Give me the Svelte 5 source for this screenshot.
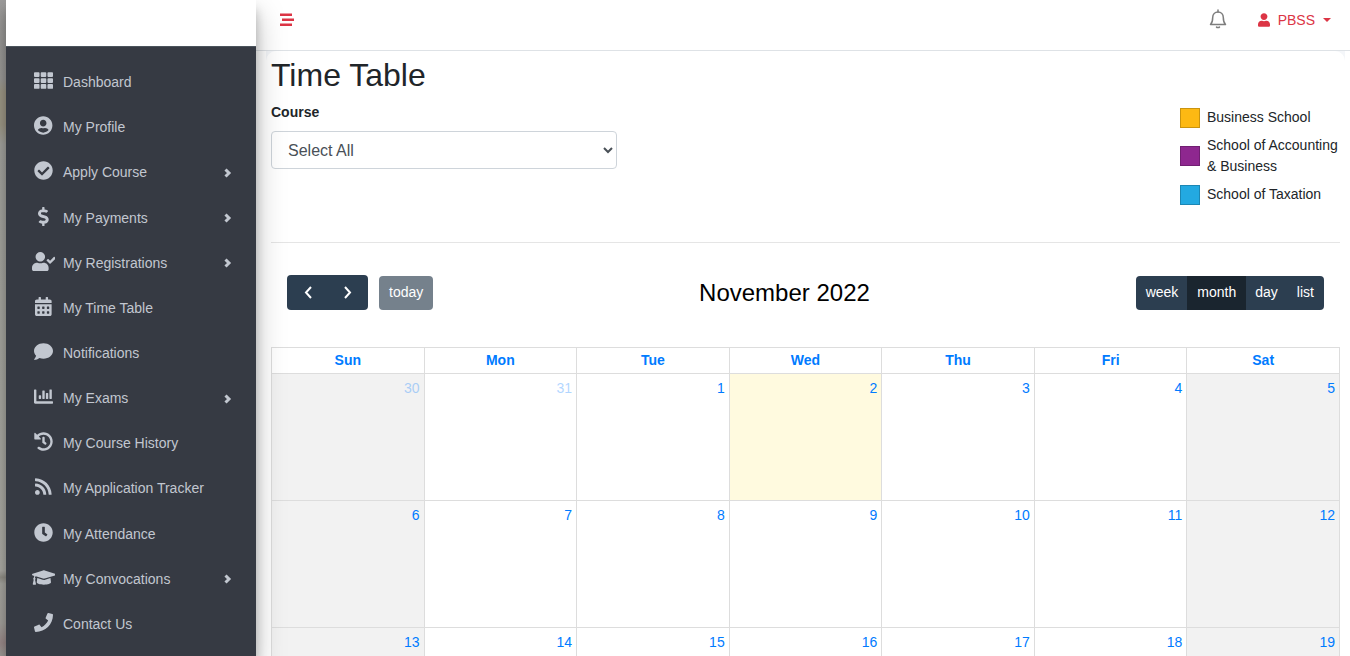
<script>
    const icons = {
        grid: { w: 512, d: "M24 32h101a24 24 0 0 1 24 24v80a24 24 0 0 1-24 24H24a24 24 0 0 1-24-24V56a24 24 0 0 1 24-24zm181 0h102a24 24 0 0 1 24 24v80a24 24 0 0 1-24 24H205a24 24 0 0 1-24-24V56a24 24 0 0 1 24-24zm182 0h101a24 24 0 0 1 24 24v80a24 24 0 0 1-24 24H387a24 24 0 0 1-24-24V56a24 24 0 0 1 24-24zM24 192h101a24 24 0 0 1 24 24v80a24 24 0 0 1-24 24H24a24 24 0 0 1-24-24v-80a24 24 0 0 1 24-24zm181 0h102a24 24 0 0 1 24 24v80a24 24 0 0 1-24 24H205a24 24 0 0 1-24-24v-80a24 24 0 0 1 24-24zm182 0h101a24 24 0 0 1 24 24v80a24 24 0 0 1-24 24H387a24 24 0 0 1-24-24v-80a24 24 0 0 1 24-24zM24 352h101a24 24 0 0 1 24 24v80a24 24 0 0 1-24 24H24a24 24 0 0 1-24-24v-80a24 24 0 0 1 24-24zm181 0h102a24 24 0 0 1 24 24v80a24 24 0 0 1-24 24H205a24 24 0 0 1-24-24v-80a24 24 0 0 1 24-24zm182 0h101a24 24 0 0 1 24 24v80a24 24 0 0 1-24 24H387a24 24 0 0 1-24-24v-80a24 24 0 0 1 24-24z" },
        profile: { w: 496, d: "M248 8C111 8 0 119 0 256s111 248 248 248 248-111 248-248S385 8 248 8zm0 96c48.6 0 88 39.4 88 88s-39.4 88-88 88-88-39.4-88-88 39.4-88 88-88zm0 344c-58.7 0-111.3-26.6-146.500-68.200 18.800-35.400 55.600-59.800 98.500-59.800 2.400 0 4.800.4 7.100 1.100 13 4.200 26.600 6.900 40.900 6.900 14.300 0 28-2.700 40.900-6.900 2.300-.7 4.700-1.100 7.100-1.100 42.900 0 79.700 24.400 98.500 59.800C359.300 421.400 306.700 448 248 448z" },
        check: { w: 512, d: "M504 256c0 136.967-111.033 248-248 248S8 392.967 8 256 119.033 8 256 8s248 111.033 248 248zM227.314 387.314l184-184c6.248-6.248 6.248-16.379 0-22.627l-22.627-22.627c-6.248-6.249-16.379-6.249-22.628 0L216 308.118l-70.059-70.059c-6.248-6.248-16.379-6.248-22.628 0l-22.627 22.627c-6.248 6.248-6.248 16.379 0 22.627l104 104c6.249 6.249 16.379 6.249 22.628.001z" },
        dollar: { w: 288, d: "M209.200 233.400l-108-31.600C88.700 198.200 80 186.500 80 173.500c0-16.300 13.200-29.500 29.500-29.500h66.300c12.200 0 24.200 3.700 34.200 10.500 6.100 4.100 14.300 3.100 19.500-2l34.800-34c7.100-6.900 6.100-18.400-1.800-24.500C238 74.800 207.400 64.100 176 64V16c0-8.800-7.200-16-16-16h-32c-8.800 0-16 7.200-16 16v48h-2.500C45.800 64-5.400 118.700.5 183.600c4.200 46.100 39.400 83.600 83.800 96.600l102.500 30c12.500 3.700 21.200 15.300 21.200 28.300 0 16.300-13.200 29.500-29.500 29.500h-66.300C100 368 88 364.300 78 357.500c-6.100-4.100-14.300-3.100-19.500 2l-34.800 34c-7.100 6.900-6.100 18.400 1.800 24.500 24.500 19.200 55.100 29.900 86.500 30v48c0 8.800 7.200 16 16 16h32c8.800 0 16-7.200 16-16v-48.200c46.600-.9 90.300-28.600 105.700-72.700 21.500-61.600-14.600-124.800-72.500-141.700z" },
        userCheck: { w: 640, d: "M224 256c70.700 0 128-57.300 128-128S294.700 0 224 0 96 57.300 96 128s57.300 128 128 128zm89.600 32h-16.700c-22.200 10.200-46.900 16-72.900 16s-50.600-5.800-72.900-16h-16.700C60.200 288 0 348.200 0 422.400V464c0 26.500 21.500 48 48 48h352c26.500 0 48-21.500 48-48v-41.600c0-74.200-60.200-134.400-134.400-134.400zM636.600 159.600l-27.800-28.200c-4.600-4.700-12.100-4.700-16.800-.1l-104.800 104-45.500-45.800c-4.600-4.700-12.100-4.700-16.800-.1l-28.100 27.900c-4.700 4.600-4.700 12.100-.1 16.800l81.700 82.300c4.600 4.700 12.100 4.700 16.800.1l141.300-140.200c4.600-4.700 4.700-12.200.1-16.700z" },
        calendar: { w: 448, d: "M0 464c0 26.500 21.500 48 48 48h352c26.500 0 48-21.500 48-48V192H0v272zm320-196c0-6.600 5.400-12 12-12h40c6.600 0 12 5.400 12 12v40c0 6.600-5.400 12-12 12h-40c-6.600 0-12-5.400-12-12v-40zm0 128c0-6.600 5.400-12 12-12h40c6.600 0 12 5.400 12 12v40c0 6.600-5.400 12-12 12h-40c-6.600 0-12-5.400-12-12v-40zM192 268c0-6.600 5.400-12 12-12h40c6.600 0 12 5.400 12 12v40c0 6.600-5.400 12-12 12h-40c-6.600 0-12-5.400-12-12v-40zm0 128c0-6.600 5.400-12 12-12h40c6.600 0 12 5.400 12 12v40c0 6.600-5.400 12-12 12h-40c-6.600 0-12-5.400-12-12v-40zM64 268c0-6.600 5.400-12 12-12h40c6.600 0 12 5.400 12 12v40c0 6.600-5.400 12-12 12H76c-6.600 0-12-5.400-12-12v-40zm0 128c0-6.600 5.400-12 12-12h40c6.600 0 12 5.400 12 12v40c0 6.600-5.400 12-12 12H76c-6.600 0-12-5.400-12-12v-40zM400 64h-48V16c0-8.800-7.200-16-16-16h-32c-8.800 0-16 7.200-16 16v48H160V16c0-8.800-7.200-16-16-16h-32c-8.800 0-16 7.200-16 16v48H48C21.500 64 0 85.500 0 112v48h448v-48c0-26.500-21.500-48-48-48z" },
        comment: { w: 512, d: "M256 32C114.600 32 0 125.100 0 240c0 49.600 21.400 95 57 130.700C44.500 421.100 2.700 466 2.200 466.500c-2.200 2.300-2.800 5.700-1.500 8.700S4.800 480 8 480c66.300 0 116-31.800 140.600-51.400 32.700 12.300 69 19.400 107.400 19.400 141.400 0 256-93.100 256-208S397.400 32 256 32z" },
        chart: { w: 512, d: "M332.800 320h38.400c6.400 0 12.800-6.400 12.800-12.800V172.800c0-6.400-6.400-12.800-12.800-12.800h-38.400c-6.400 0-12.800 6.400-12.800 12.800v134.400c0 6.400 6.400 12.800 12.800 12.800zm96 0h38.400c6.400 0 12.800-6.400 12.800-12.800V76.800c0-6.400-6.400-12.800-12.800-12.800h-38.400c-6.400 0-12.800 6.400-12.800 12.800v230.400c0 6.400 6.400 12.800 12.800 12.800zm-288 0h38.400c6.400 0 12.800-6.400 12.800-12.800v-70.400c0-6.400-6.400-12.800-12.800-12.800h-38.400c-6.400 0-12.800 6.400-12.800 12.800v70.400c0 6.400 6.400 12.800 12.800 12.800zm96 0h38.400c6.400 0 12.800-6.400 12.800-12.800V108.800c0-6.400-6.400-12.800-12.800-12.800h-38.400c-6.400 0-12.800 6.400-12.800 12.800v198.400c0 6.400 6.400 12.800 12.800 12.800zM496 384H64V80c0-8.840-7.160-16-16-16H16C7.160 64 0 71.160 0 80v336c0 17.670 14.330 32 32 32h464c8.840 0 16-7.160 16-16v-32c0-8.840-7.160-16-16-16z" },
        history: { w: 512, d: "M504 255.531c.253 136.640-111.180 248.372-247.820 248.468-59.015.042-113.223-20.530-155.822-54.911-11.077-8.940-11.905-25.541-1.839-35.607l11.267-11.267c8.609-8.609 22.353-9.551 31.891-1.984C173.062 425.135 212.781 440 256 440c101.705 0 184-82.311 184-184 0-101.705-82.311-184-184-184-48.814 0-93.149 18.969-126.068 49.932l50.754 50.754c10.080 10.080 2.941 27.314-11.313 27.314H24c-8.837 0-16-7.163-16-16V38.627c0-14.254 17.234-21.393 27.314-11.314l49.372 49.372C129.209 34.136 189.552 8 256 8c136.810 0 247.747 110.780 248 247.531zm-180.912 78.784l9.823-12.630c8.138-10.463 6.253-25.542-4.210-33.679L288 256.349V152c0-13.255-10.745-24-24-24h-16c-13.255 0-24 10.745-24 24v135.651l65.409 50.874c10.463 8.137 25.541 6.253 33.679-4.210z" },
        rss: { w: 448, d: "M128.081 415.959c0 35.369-28.672 64.041-64.041 64.041S0 451.328 0 415.959s28.672-64.041 64.041-64.041 64.040 28.673 64.040 64.041zm175.660 47.250c-8.354-154.600-132.185-278.587-286.950-286.950C7.656 175.765 0 183.105 0 192.253v48.069c0 8.415 6.490 15.472 14.887 16.018 111.832 7.284 201.473 96.702 208.772 208.772.547 8.397 7.604 14.887 16.018 14.887h48.069c9.149.001 16.489-7.655 15.995-16.790zm144.249.288C439.596 229.677 251.465 40.445 16.503 32.010 7.473 31.686 0 38.981 0 48.016v48.068c0 8.625 6.835 15.645 15.453 15.999 191.179 7.839 344.627 161.316 352.465 352.465.353 8.618 7.373 15.453 15.999 15.453h48.068c9.034-.001 16.329-7.474 16.005-16.504z" },
        clock: { w: 512, d: "M256 8C119 8 8 119 8 256s111 248 248 248 248-111 248-248S393 8 256 8zm57.100 350.100L224.900 294c-3.100-2.300-4.900-5.900-4.900-9.700V116c0-6.600 5.400-12 12-12h48c6.600 0 12 5.400 12 12v137.700l63.500 46.200c5.400 3.900 6.500 11.400 2.600 16.800l-28.200 38.800c-3.900 5.300-11.400 6.500-16.800 2.600z" },
        cap: { w: 640, d: "M622.340 153.200L343.400 67.500c-15.200-4.670-31.600-4.670-46.790 0L17.660 153.200c-23.540 7.230-23.540 38.360 0 45.590l48.630 14.940c-10.670 13.190-17.230 29.280-17.880 46.900C38.780 266.150 32 276.110 32 288c0 10.780 5.680 19.850 13.860 25.650L20.330 428.530C18.110 438.520 25.710 448 35.940 448h56.110c10.240 0 17.840-9.480 15.620-19.470L82.140 313.650C90.320 307.850 96 298.780 96 288c0-11.570-6.470-21.250-15.660-26.870.76-15.020 8.440-28.300 20.690-36.720L296.600 284.500c9.060 2.780 26.440 6.250 46.790 0l278.950-85.700c23.550-7.240 23.550-38.360 0-45.600zM352.790 315.090c-28.530 8.760-52.840 3.920-65.590 0l-145.020-44.550L128 384c0 35.350 85.960 64 192 64s192-28.650 192-64l-14.180-113.470-145.030 44.560z" },
        phone: { w: 512, d: "M493.400 24.600l-104-24c-11.300-2.600-22.900 3.300-27.500 13.900l-48 112c-4.200 9.800-1.400 21.300 6.900 28l60.600 49.600c-36 76.700-98.900 140.500-177.200 177.200l-49.600-60.600c-6.800-8.300-18.200-11.100-28-6.900l-112 48C3.900 366.500-2 378.100.6 389.400l24 104C27.100 504.200 36.700 512 48 512c256.100 0 464-207.500 464-464 0-11.200-7.700-20.900-18.600-23.400z" },
    };

    const menu = [
        { label: "Dashboard", icon: "grid" },
        { label: "My Profile", icon: "profile" },
        { label: "Apply Course", icon: "check", sub: true },
        { label: "My Payments", icon: "dollar", sub: true },
        { label: "My Registrations", icon: "userCheck", sub: true },
        { label: "My Time Table", icon: "calendar" },
        { label: "Notifications", icon: "comment" },
        { label: "My Exams", icon: "chart", sub: true },
        { label: "My Course History", icon: "history" },
        { label: "My Application Tracker", icon: "rss" },
        { label: "My Attendance", icon: "clock" },
        { label: "My Convocations", icon: "cap", sub: true },
        { label: "Contact Us", icon: "phone" },
    ];

    const schools = [
        { name: "Business School", color: "#fdb913" },
        { name: "School of Accounting & Business", color: "#8e278f" },
        { name: "School of Taxation", color: "#23a9e1" },
    ];

    const dayNames = ["Sun", "Mon", "Tue", "Wed", "Thu", "Fri", "Sat"];
    const views = ["week", "month", "day", "list"];
    const today = new Date(2022, 10, 2);

    let course = $state("all");
    let view = $state("month");
    let year = $state(2022);
    let month = $state(10);

    const title = $derived(
        new Date(year, month, 1).toLocaleString("en-US", { month: "long", year: "numeric" })
    );

    const isThisMonth = $derived(year === today.getFullYear() && month === today.getMonth());

    const weeks = $derived.by(() => {
        const offset = new Date(year, month, 1).getDay();
        return Array.from({ length: 6 }, (_, w) =>
            Array.from({ length: 7 }, (_, d) => {
                const date = new Date(year, month, 1 - offset + w * 7 + d);
                return {
                    num: date.getDate(),
                    other: date.getMonth() !== month,
                    weekend: d === 0 || d === 6,
                    today: date.getTime() === today.getTime(),
                };
            })
        );
    });

    function move(step) {
        const next = new Date(year, month + step, 1);
        year = next.getFullYear();
        month = next.getMonth();
    }

    function goToday() {
        year = today.getFullYear();
        month = today.getMonth();
    }
</script>

<div class="shell">
    <div class="backdrop"></div>

    <aside class="sidebar">
        <div class="brand"></div>
        <nav>
            <ul>
                {#each menu as item}
                    <li>
                        <a href="#top">
                            <span class="icon">
                                <svg viewBox="0 0 {icons[item.icon].w} 512" height="19" aria-hidden="true">
                                    <path d={icons[item.icon].d} />
                                </svg>
                            </span>
                            <span class="label">{item.label}</span>
                            {#if item.sub}
                                <svg class="arrow" viewBox="0 0 8 10" width="8" height="10" aria-hidden="true">
                                    <path d="M1.500 1.500L5 5 1.500 8.500" />
                                </svg>
                            {/if}
                        </a>
                    </li>
                {/each}
            </ul>
        </nav>
    </aside>

    <div class="main">
        <header>
            <button class="toggle" aria-label="Toggle menu">
                <svg viewBox="0 0 14 14" width="14" height="14">
                    <path d="M0 .5h12V3H0zM2 5.500h12V8H2zM0 10.500h12V13H0z" />
                </svg>
            </button>
            <div class="account">
                <button class="bell" aria-label="Alerts">
                    <svg viewBox="0 0 18 20" width="18" height="20">
                        <path d="M1.500 15.500c1.800-1.800 2.200-3.500 2.200-7C3.700 5.300 6 3 9 3s5.300 2.300 5.300 5.500c0 3.500.4 5.200 2.200 7z" />
                        <path d="M9 1v2M7.500 18c.5.700 2.500.7 3 0" />
                    </svg>
                </button>
                <button class="user">
                    <svg viewBox="0 0 448 512" width="12" height="14" aria-hidden="true">
                        <path d="M224 256c70.700 0 128-57.300 128-128S294.700 0 224 0 96 57.300 96 128s57.300 128 128 128zm89.600 32h-16.700c-22.200 10.200-46.900 16-72.900 16s-50.600-5.800-72.900-16h-16.700C60.200 288 0 348.200 0 422.400V464c0 26.500 21.500 48 48 48h352c26.500 0 48-21.500 48-48v-41.600c0-74.200-60.200-134.400-134.400-134.400z" />
                    </svg>
                    PBSS
                    <span class="caret"></span>
                </button>
            </div>
        </header>

        <div class="content">
            <main class="card">
                <div class="top">
                    <div class="filter">
                        <h1>Time Table</h1>
                        <label for="course">Course</label>
                        <select id="course" bind:value={course}>
                            <option value="all">Select All</option>
                            {#each schools as school}
                                <option value={school.name}>{school.name}</option>
                            {/each}
                        </select>
                    </div>
                    <ul class="legend">
                        {#each schools as school}
                            <li>
                                <span class="swatch" style="background-color: {school.color};"></span>
                                <span>{school.name}</span>
                            </li>
                        {/each}
                    </ul>
                </div>

                <div class="toolbar">
                    <div class="left">
                        <div class="group">
                            <button class="nav" aria-label="Previous" onclick={() => move(-1)}>
                                <svg viewBox="0 0 10 14" width="10" height="14"><path d="M8 2L3 7.500 8 13" /></svg>
                            </button>
                            <button class="nav" aria-label="Next" onclick={() => move(1)}>
                                <svg viewBox="0 0 10 14" width="10" height="14"><path d="M2 2l5 5.500L2 13" /></svg>
                            </button>
                        </div>
                        <button class="today-button" disabled={isThisMonth} onclick={goToday}>today</button>
                    </div>
                    <h2>{title}</h2>
                    <div class="group">
                        {#each views as v}
                            <button class:active={view === v} onclick={() => (view = v)}>{v}</button>
                        {/each}
                    </div>
                </div>

                <table>
                    <thead>
                        <tr>
                            {#each dayNames as day}
                                <th scope="col">{day}</th>
                            {/each}
                        </tr>
                    </thead>
                    <tbody>
                        {#each weeks as week}
                            <tr>
                                {#each week as cell}
                                    <td class:weekend={cell.weekend} class:today={cell.today} class:other={cell.other}>
                                        <a href="#top">{cell.num}</a>
                                    </td>
                                {/each}
                            </tr>
                        {/each}
                    </tbody>
                </table>
            </main>
        </div>
    </div>
</div>

<style>
    :global(html) {
        scrollbar-width: none;
    }

    :global(body) {
        margin: 0;
        font-family: "Liberation Sans", Arial, sans-serif;
        font-size: 14px;
        line-height: 21px;
        color: #212529;
        background: #fff;
    }

    * {
        box-sizing: border-box;
    }

    button {
        font: inherit;
        border: 0;
        padding: 0;
        background: none;
        cursor: pointer;
    }

    a {
        text-decoration: none;
    }

    ul {
        list-style: none;
        margin: 0;
        padding: 0;
    }

    svg {
        display: block;
    }

    .shell {
        display: flex;
        align-items: flex-start;
    }

    /* strip of the photo behind the menu */
    .backdrop {
        position: sticky;
        top: 0;
        flex: 0 0 6px;
        height: 100vh;
        background: linear-gradient(#9c9b9a 0%, #a09f9c 12%, #a39d8b 14%, #a39d8b 19%, #a9a9a4 22%, #aeaea7 60%, #b2b1ab 87%, #96948c 88%, #adaca6 89%, #aaa7a2 95%, #a08f8f 98%, #a3a09c 100%);
    }

    /* sidebar */
    .sidebar {
        position: sticky;
        top: 0;
        z-index: 2;
        flex: 0 0 250px;
        height: 100vh;
        background: #363a43;
        box-shadow: 0 14px 28px rgba(0, 0, 0, 0.25), 0 10px 10px rgba(0, 0, 0, 0.22);
    }

    .brand {
        height: 47px;
        background: #fff;
        border-bottom: 1px solid #4b545c;
    }

    nav {
        padding: 13px 8px 0;
    }

    nav ul {
        display: grid;
        grid-auto-rows: 1fr;
        height: 587px;
    }

    nav a {
        display: flex;
        align-items: center;
        height: 100%;
        padding: 0 16px 0 15px;
        color: #c2c7d0;
    }

    .icon {
        display: flex;
        justify-content: center;
        width: 29px;
        margin-right: 5px;
        padding-bottom: 4px;
    }

    .icon svg {
        fill: #c2c7d0;
    }

    .label {
        flex: 1;
    }

    .arrow {
        fill: none;
        stroke: #c2c7d0;
        stroke-width: 3;
    }

    /* top bar */
    .main {
        flex: 1;
        min-width: 0;
    }

    header {
        display: flex;
        justify-content: space-between;
        height: 51px;
        padding: 0 19px 10px 24px;
        border-bottom: 1px solid #dee2e6;
    }

    .toggle svg {
        fill: #dc3545;
    }

    .account {
        display: flex;
        align-items: center;
        gap: 31px;
    }

    .bell {
        padding-bottom: 2px;
    }

    .bell svg {
        fill: none;
        stroke: #7d7d7d;
        stroke-width: 1.5;
        stroke-linecap: round;
        stroke-linejoin: round;
    }

    .user {
        display: flex;
        align-items: center;
        gap: 8px;
        color: #dc3545;
    }

    .user svg {
        fill: #dc3545;
    }

    .caret {
        border: 4px solid transparent;
        border-top-color: #dc3545;
        border-bottom: 0;
    }

    /* page */
    .content {
        margin: 0 5px 0 10px;
        background: #f4f6f9;
    }

    .card {
        padding: 5px 5px 0;
        border-radius: 10px;
        background: #fff;
    }

    .top {
        display: flex;
        justify-content: space-between;
        height: 187px;
        border-bottom: 1px solid #e5e5e5;
    }

    .filter {
        width: 346px;
    }

    h1 {
        margin: 0 0 8px;
        font-size: 32px;
        font-weight: 400;
        line-height: 38px;
    }

    label {
        display: block;
        margin-bottom: 8px;
        font-weight: 700;
    }

    select {
        width: 100%;
        height: 38px;
        padding: 0 0 0 12px;
        border: 1px solid #ced4da;
        border-radius: 4px;
        background: #fff;
        color: #495057;
        font: inherit;
        font-size: 16px;
    }

    .legend {
        display: flex;
        flex-direction: column;
        gap: 7px;
        width: 160px;
        padding-top: 51px;
    }

    .legend li {
        display: flex;
        align-items: center;
        gap: 7px;
    }

    .swatch {
        flex: 0 0 20px;
        height: 20px;
        border: 1px solid rgba(0, 0, 0, 0.2);
    }

    /* calendar toolbar */
    .toolbar {
        display: flex;
        justify-content: space-between;
        align-items: flex-end;
        padding: 32px 16px 37px;
    }

    .left {
        display: flex;
        align-items: flex-end;
        gap: 11px;
    }

    .group {
        display: flex;
        overflow: hidden;
        border-radius: 4px;
        background: #2c3e50;
    }

    .group button {
        height: 34px;
        padding: 0 10px 1px;
        color: #fff;
    }

    .group button + button {
        margin-left: -1px;
    }

    .group .nav {
        display: flex;
        align-items: center;
        justify-content: center;
        width: 41px;
        height: 35px;
    }

    .nav svg {
        fill: none;
        stroke: #fff;
        stroke-width: 2;
    }

    .group .active {
        background: #1a252f;
    }

    .today-button {
        height: 34px;
        padding: 0 10px 1px;
        border-radius: 4px;
        background: #2c3e50;
        color: #fff;
    }

    .today-button:disabled {
        opacity: 0.65;
    }

    h2 {
        margin: 0;
        font-size: 24px;
        font-weight: 400;
        line-height: 35px;
        color: #000;
    }

    /* month grid */
    table {
        width: 100%;
        table-layout: fixed;
        border-collapse: collapse;
    }

    th,
    td {
        padding: 0;
        border: 1px solid #ddd;
    }

    th {
        height: 26px;
        color: #007bff;
    }

    td {
        height: 127px;
        padding: 4px;
        vertical-align: top;
        text-align: right;
    }

    td a {
        color: #007bff;
    }

    .weekend {
        background: #f2f2f2;
    }

    .today {
        background: #fffadf;
    }

    .other a {
        opacity: 0.3;
    }
</style>
